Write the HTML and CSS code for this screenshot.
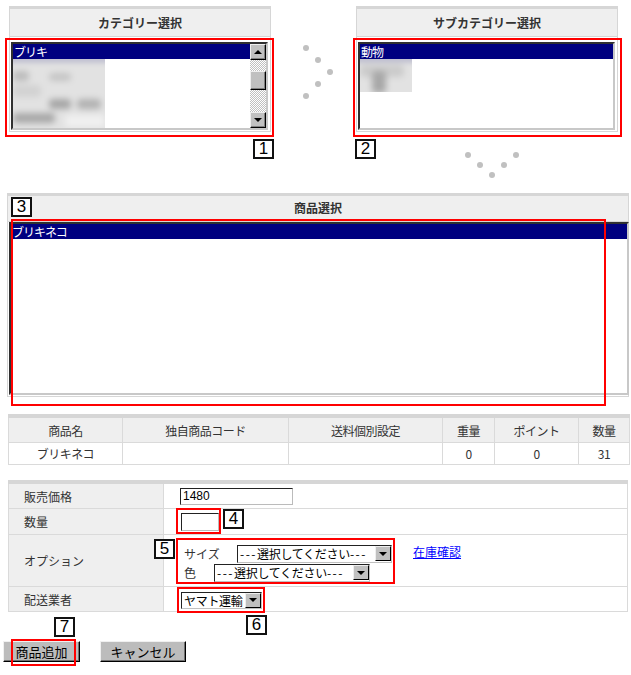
FILE: index.html
```html
<!DOCTYPE html>
<html lang="ja">
<head>
    <meta charset="UTF-8">
    <title>商品選択</title>
    <link rel="stylesheet" href="styles.css">
</head>
<body>

<div class="page">

    <!-- カテゴリー / サブカテゴリー -->
    <div class="top">
        <div class="panel cat">
            <div class="panel-head">カテゴリー選択</div>
            <div class="panel-body">
                <div class="listbox small">
                    <div class="options">
                        <div class="opt selected">ブリキ</div>
                        <div class="blur-area cat-blur">
                            <div class="blur-in">
                                <span class="blob k1"></span>
                                <span class="blob k2"></span>
                                <span class="blob k3"></span>
                                <span class="blob k4"></span>
                                <span class="blob k5"></span>
                                <span class="blob k6"></span>
                                <span class="blob k7"></span>
                            </div>
                        </div>
                    </div>
                    <div class="scrollbar">
                        <div class="sb-btn"><span class="tri up"></span></div>
                        <div class="sb-track"><div class="sb-thumb"></div></div>
                        <div class="sb-btn"><span class="tri down"></span></div>
                    </div>
                </div>
            </div>
        </div>

        <div class="panel sub">
            <div class="panel-head">サブカテゴリー選択</div>
            <div class="panel-body">
                <div class="listbox small">
                    <div class="options">
                        <div class="opt selected">動物</div>
                        <div class="blur-area sub-blur">
                            <div class="blur-in">
                                <span class="blob s1"></span>
                                <span class="blob s2"></span>
                            </div>
                        </div>
                    </div>
                </div>
            </div>
        </div>
    </div>

    <!-- 商品選択 -->
    <div class="panel product">
        <div class="panel-head short">商品選択</div>
        <div class="panel-body flat">
            <div class="listbox big">
                <div class="options">
                    <div class="opt selected">ブリキネコ</div>
                </div>
            </div>
        </div>
    </div>

    <!-- 商品情報 -->
    <table class="items">
        <tr>
            <th class="c1">商品名</th>
            <th class="c2">独自商品コード</th>
            <th class="c3">送料個別設定</th>
            <th class="c4">重量</th>
            <th class="c5">ポイント</th>
            <th class="c6">数量</th>
        </tr>
        <tr>
            <td>ブリキネコ</td>
            <td></td>
            <td></td>
            <td>0</td>
            <td>0</td>
            <td>31</td>
        </tr>
    </table>

    <table class="form">
        <tr class="r1">
            <th>販売価格</th>
            <td><span class="field price">1480</span></td>
        </tr>
        <tr class="r2">
            <th>数量</th>
            <td><span class="field qty"></span></td>
        </tr>
        <tr class="r3">
            <th>オプション</th>
            <td class="opt-cell">
                <div class="opt-wrap">
                    <div class="opt-rows">
                        <div class="opt-row">
                            <span class="opt-label size">サイズ</span>
                            <span class="select w-size"><span class="sel-text"><span class="dash">---</span>選択してください<span class="dash">---</span></span><span class="sel-btn"><span class="tri down"></span></span></span>
                        </div>
                        <div class="opt-row">
                            <span class="opt-label color">色</span>
                            <span class="select w-color"><span class="sel-text"><span class="dash">---</span>選択してください<span class="dash">---</span></span><span class="sel-btn"><span class="tri down"></span></span></span>
                        </div>
                    </div>
                    <a href="#" class="stock">在庫確認</a>
                </div>
            </td>
        </tr>
        <tr class="r4">
            <th>配送業者</th>
            <td><span class="select w-ship"><span class="sel-text">ヤマト運輸</span><span class="sel-btn"><span class="tri down"></span></span></span></td>
        </tr>
    </table>

    <div class="buttons">
        <button class="btn add">商品追加</button>
        <button class="btn cancel">キャンセル</button>
    </div>

    <!-- 矢印 -->
    <svg class="dots dots-right" width="32" height="56" viewBox="0 0 32 56">
        <circle cx="4" cy="4" r="3"/>
        <circle cx="16" cy="16" r="3"/>
        <circle cx="28" cy="28" r="3"/>
        <circle cx="16" cy="40" r="3"/>
        <circle cx="4" cy="52" r="3"/>
    </svg>
    <svg class="dots dots-down" width="56" height="28" viewBox="0 0 56 28">
        <circle cx="4" cy="4" r="3"/>
        <circle cx="16" cy="14" r="3"/>
        <circle cx="28" cy="24" r="3"/>
        <circle cx="40" cy="14" r="3"/>
        <circle cx="52" cy="4" r="3"/>
    </svg>

    <!-- 注釈 -->
    <div class="mark m1"></div>
    <div class="mark m2"></div>
    <div class="mark m3"></div>
    <div class="mark m4"></div>
    <div class="mark m5"></div>
    <div class="mark m6"></div>
    <div class="mark m7"></div>

    <div class="badge b1">1</div>
    <div class="badge b2">2</div>
    <div class="badge b3">3</div>
    <div class="badge b4">4</div>
    <div class="badge b5">5</div>
    <div class="badge b6">6</div>
    <div class="badge b7">7</div>
</div>

</body>
</html>
```

FILE: styles.css
```css
body {
    margin: 0;
    font-family: "Noto Sans CJK JP", sans-serif;
    font-size: 12px;
    color: #333;
    background: #fff;
}
.page {
    position: relative;
    width: 631px;
    height: 675px;
}

/* パネル */
.top {
    display: flex;
    padding-top: 6px;
}
.panel {
    box-sizing: border-box;
    border: 1px solid #d6d6d6;
    border-top: 3px solid #d6d6d6;
}
.cat {
    width: 262px;
    margin-left: 9px;
}
.sub {
    width: 262px;
    margin-left: 85px;
}
.panel-head {
    height: 27px;
    line-height: 27px;
    background: #efefef;
    border-bottom: 1px solid #d6d6d6;
    text-align: center;
    font-weight: bold;
}
.panel-head.short {
    height: 25px;
    line-height: 24px;
}
.panel-body {
    padding: 5px 1px 1px 1px;
}
.panel-body.flat {
    padding: 0 0 1px 1px;
}
.product {
    width: 622px;
    margin: 61px 0 0 7px;
}

/* リストボックス */
.listbox {
    display: flex;
    box-sizing: border-box;
    border: 2px solid;
    border-color: #303030 #c8c8c8 #c8c8c8 #303030;
    background: #fff;
}
.listbox.small {
    width: 257px;
    height: 88px;
}
.listbox.big {
    width: 620px;
    height: 173px;
}
.options {
    flex: 1;
}
.opt {
    height: 15px;
    line-height: 15px;
    padding-left: 1px;
    color: #000;
    letter-spacing: -1px;
}
.opt.selected {
    background: #000080;
    color: #fff;
}
.blur-area {
    position: relative;
    overflow: hidden;
}
.cat-blur {
    width: 92px;
    height: 69px;
}
.sub-blur {
    width: 52px;
    height: 33px;
}
.blur-in {
    position: absolute;
    inset: -8px;
    background: #e2e2e2;
    filter: blur(3px);
}
.blur-in::before {
    content: "";
    position: absolute;
    left: 0;
    right: 0;
    top: 6px;
    height: 4px;
    background: #a0a0c0;
}
.blob {
    position: absolute;
    background: #b4b4b4;
    border-radius: 4px;
}
.k1 { left: 8px; top: 20px; width: 16px; height: 10px; background: #bcbcbc; }
.k2 { left: 44px; top: 22px; width: 22px; height: 8px; background: #c4c4c4; }
.k3 { left: 8px; top: 34px; width: 28px; height: 12px; background: #d2d2d2; }
.k4 { left: 44px; top: 48px; width: 22px; height: 10px; background: #a6a6a6; }
.k5 { left: 72px; top: 48px; width: 24px; height: 10px; background: #b2b2b2; }
.k6 { left: 8px; top: 62px; width: 42px; height: 10px; background: #a8a8a8; }
.k7 { left: 60px; top: 64px; width: 40px; height: 12px; background: #f0f0f0; }
.s1 { left: 8px; top: 14px; width: 44px; height: 12px; background: #cbcbcb; }
.s2 { left: 20px; top: 20px; width: 14px; height: 22px; background: #a8a8a8; }

/* スクロールバー */
.scrollbar {
    display: flex;
    flex-direction: column;
    width: 16px;
}
.sb-btn, .sb-thumb {
    box-sizing: border-box;
    background: #c0c0c0;
    border: 1px solid;
    border-color: #eee #000 #000 #eee;
    box-shadow: inset -1px -1px 0 #808080;
}
.sb-btn {
    height: 16px;
    display: flex;
    align-items: center;
    justify-content: center;
}
.sb-track {
    flex: 1;
    background: repeating-conic-gradient(#c0c0c0 0 25%, #fff 0 50%) 0 0 / 2px 2px;
}
.sb-thumb {
    height: 19px;
    margin-top: 11px;
}
.tri {
    width: 0;
    height: 0;
    border-left: 4px solid transparent;
    border-right: 4px solid transparent;
}
.tri.up {
    border-bottom: 4px solid #000;
}
.tri.down {
    border-top: 4px solid #000;
}

/* 商品テーブル */
.items {
    margin: 17px 0 0 8px;
    width: 622px;
    border-collapse: collapse;
    border-top: 4px solid #d6d6d6;
}
.items th, .items td {
    border: 1px solid #dadada;
    text-align: center;
    font-weight: normal;
    padding: 0;
    letter-spacing: -0.5px;
}
.items th {
    height: 24px;
    background: #efefef;
}
.items td {
    height: 21px;
}
.c1 { width: 113px; }
.c2 { width: 165px; }
.c3 { width: 153px; }
.c4 { width: 51px; }
.c5 { width: 83px; }

/* 入力フォーム */
.form {
    margin: 15px 0 0 8px;
    width: 620px;
    border-collapse: collapse;
    border-top: 4px solid #d6d6d6;
}
.form th, .form td {
    border: 1px solid #dadada;
    padding: 0;
}
.form th {
    box-sizing: border-box;
    width: 155px;
    padding-left: 15px;
    background: #efefef;
    text-align: left;
    font-weight: normal;
}
.form td {
    padding-left: 16px;
}
.r1 th, .r1 td { height: 24px; }
.r2 th, .r2 td { height: 25px; }
.r3 th { height: 51px; }
.r3 td { height: 45px; }
.r4 th, .r4 td { height: 24px; }
.form td.opt-cell {
    padding-top: 6px;
}

.field {
    display: block;
    box-sizing: border-box;
    border: 1px solid;
    border-color: #222 #bbb #bbb #222;
    background: #fff;
    font-family: "Liberation Sans", Arial, sans-serif;
    font-size: 12px;
    color: #000;
    line-height: 15px;
    padding-left: 2px;
}
.field.price {
    width: 113px;
    height: 17px;
}
.field.qty {
    width: 38px;
    height: 18px;
    margin-left: 1px;
}

.opt-wrap {
    display: flex;
    align-items: flex-start;
    margin-left: 4px;
}
.opt-row {
    display: flex;
    align-items: center;
    height: 18px;
    margin-bottom: 1px;
}
.opt-label {
    color: #333;
}
.opt-label.size { width: 53px; }
.opt-label.color { width: 30px; }
.stock {
    margin-left: 21px;
    color: #0000ff;
    line-height: 14px;
}

.select {
    display: inline-flex;
    align-items: center;
    justify-content: space-between;
    box-sizing: border-box;
    height: 18px;
    border: 1px solid;
    border-color: #222 #c0c0c0 #c0c0c0 #222;
    background: #fff;
    color: #000;
    vertical-align: middle;
}
.w-size { width: 155px; }
.w-color { width: 156px; }
.w-ship {
    width: 81px;
    height: 17px;
    margin-left: 1px;
}
.sel-text {
    padding-left: 2px;
    white-space: nowrap;
    letter-spacing: -0.3px;
}
.dash {
    letter-spacing: 1.5px;
}
.sel-btn {
    display: flex;
    align-items: center;
    justify-content: center;
    box-sizing: border-box;
    width: 16px;
    height: 15px;
    background: #c0c0c0;
    border: 1px solid;
    border-color: #eee #000 #000 #eee;
}

/* ボタン */
.buttons {
    display: flex;
    margin-top: 29px;
}
.btn {
    box-sizing: border-box;
    height: 21px;
    padding: 0;
    background: #bcbcbc;
    border: 1px solid;
    border-color: #f0f0f0 #000 #000 #f0f0f0;
    box-shadow: inset -1px -1px 0 #707070;
    font-family: "Noto Sans CJK JP", sans-serif;
    font-size: 13px;
    color: #000;
    line-height: 18px;
}
.btn.add {
    width: 77px;
    margin-left: 3px;
}
.btn.cancel {
    width: 86px;
    margin-left: 20px;
}

/* 矢印の点 */
.dots {
    position: absolute;
    fill: #c0c0c0;
}
.dots-right { left: 302px; top: 44px; }
.dots-down { left: 464px; top: 151px; }

/* 赤枠と番号 */
.mark {
    position: absolute;
    box-sizing: border-box;
    border: 2px solid #ff0000;
}
.m1 { left: 5px; top: 38px; width: 269px; height: 99px; }
.m2 { left: 353px; top: 38px; width: 269px; height: 99px; }
.m3 { left: 11px; top: 219px; width: 595px; height: 187px; }
.m4 { left: 176px; top: 508px; width: 45px; height: 26px; }
.m5 { left: 176px; top: 538px; width: 219px; height: 46px; }
.m6 { left: 177px; top: 587px; width: 88px; height: 26px; }
.m7 { left: 11px; top: 639px; width: 65px; height: 27px; }

.badge {
    position: absolute;
    box-sizing: border-box;
    width: 21px;
    height: 20px;
    border: 2px solid #111;
    background: #fff;
    font-family: "Liberation Sans", Arial, sans-serif;
    font-size: 17px;
    line-height: 16px;
    text-align: center;
    color: #000;
}
.b1 { left: 253px; top: 139px; }
.b2 { left: 355px; top: 139px; }
.b3 { left: 11px; top: 197px; }
.b4 { left: 223px; top: 509px; }
.b5 { left: 154px; top: 539px; }
.b6 { left: 246px; top: 615px; }
.b7 { left: 54px; top: 617px; }
```
